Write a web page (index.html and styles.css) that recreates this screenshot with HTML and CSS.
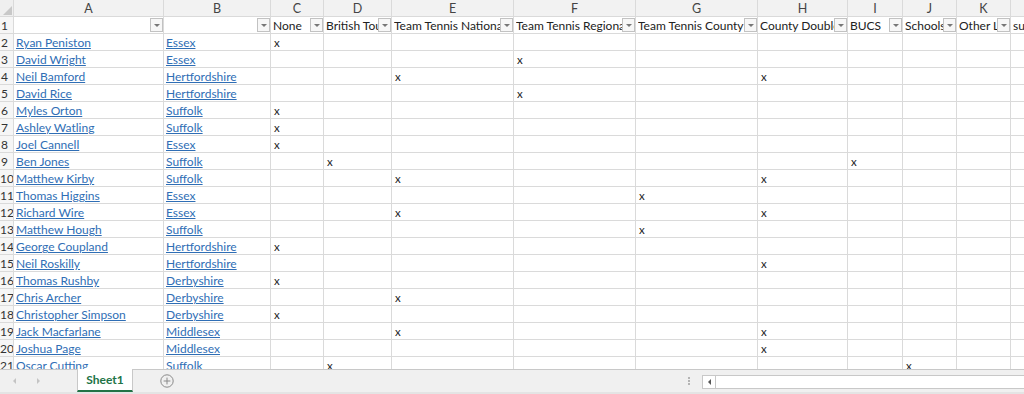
FILE: index.html
```html
<!DOCTYPE html>
<html lang="en">

<head>
    <meta charset="UTF-8">
    <meta name="viewport" content="width=device-width, initial-scale=1.0">
    <title>Sheet1</title>
    <link rel="stylesheet" href="styles.css">
</head>

<body>
<div class="book">
    <div class="sheet" id="sheet"></div>
    <div class="tabs">
        <div class="nav">
            <span class="tri left"></span>
            <span class="tri right"></span>
        </div>
        <div class="tab">Sheet1</div>
        <div class="add">
            <svg width="14" height="14" viewBox="0 0 14 14">
                <circle cx="7" cy="7" r="6.2" fill="none" stroke="#8a8a8a" stroke-width="1"/>
                <path d="M7 3.6v6.8M3.6 7h6.8" stroke="#8a8a8a" stroke-width="1"/>
            </svg>
        </div>
        <div class="spacer"></div>
        <div class="grip"><i></i><i></i><i></i></div>
        <div class="hscroll">
            <div class="hbtn"><span class="tri dark"></span></div>
        </div>
    </div>
</div>
<script type="text/javascript">
    (function (d) {
        var letters = ['', 'A', 'B', 'C', 'D', 'E', 'F', 'G', 'H', 'I', 'J', 'K', ''],
            heads = ['', '', 'None', 'British Tour', 'Team Tennis National', 'Team Tennis Regional',
                'Team Tennis County', 'County Doubles', 'BUCS', 'Schools', 'Other League', 'sum'],
            rows = [
                ['Ryan Peniston', 'Essex', 'C'],
                ['David Wright', 'Essex', 'F'],
                ['Neil Bamford', 'Hertfordshire', 'EH'],
                ['David Rice', 'Hertfordshire', 'F'],
                ['Myles Orton', 'Suffolk', 'C'],
                ['Ashley Watling', 'Suffolk', 'C'],
                ['Joel Cannell', 'Essex', 'C'],
                ['Ben Jones', 'Suffolk', 'DI'],
                ['Matthew Kirby', 'Suffolk', 'EH'],
                ['Thomas Higgins', 'Essex', 'G'],
                ['Richard Wire', 'Essex', 'EH'],
                ['Matthew Hough', 'Suffolk', 'G'],
                ['George Coupland', 'Hertfordshire', 'C'],
                ['Neil Roskilly', 'Hertfordshire', 'H'],
                ['Thomas Rushby', 'Derbyshire', 'C'],
                ['Chris Archer', 'Derbyshire', 'E'],
                ['Christopher Simpson', 'Derbyshire', 'C'],
                ['Jack Macfarlane', 'Middlesex', 'EH'],
                ['Joshua Page', 'Middlesex', 'H'],
                ['Oscar Cutting', 'Suffolk', 'DJ']
            ],
            s = d.getElementById('sheet'),
            html = '';

        // column letters
        letters.forEach(function (l, i) {
            html += '<div class="' + (i === 0 ? 'corner' : 'colhead') + '">' + l + '</div>';
        });

        // row 1 with filters
        html += '<div class="rowhead"><span>1</span></div>';
        heads.forEach(function (h, i) {
            var btn = i < 11 ? '<span class="filter"></span>' : '';
            html += '<div class="cell head"><span class="txt">' + h + '</span>' + btn + '</div>';
        });

        rows.forEach(function (r, n) {
            html += '<div class="rowhead"><span>' + (n + 2) + '</span></div>';
            html += '<div class="cell"><a href="#">' + r[0] + '</a></div>';
            html += '<div class="cell"><a href="#">' + r[1] + '</a></div>';
            for (var c = 3; c < 13; c++) {
                html += '<div class="cell mark">' + (r[2].indexOf(letters[c]) > -1 && letters[c] ? 'x' : '') + '</div>';
            }
        });

        s.innerHTML = html;
    })(document);
</script>
</body>

</html>
```

FILE: styles.css
```css
body {
    margin: 0;
    padding: 0;
    background: #fff;
    font-family: Lato, "Open Sans", sans-serif;
}

.book {
    width: 1024px;
    height: 394px;
    overflow: hidden;
    display: flex;
    flex-direction: column;
}

.sheet {
    height: 369px;
    overflow: hidden;
    display: grid;
    grid-template-columns: 13px 149px 106px 52px 67px 121px 121px 121px 89px 54px 53px 53px 60px;
    grid-auto-rows: 16px;
    gap: 1px;
    background: #dadada;
    align-content: start;
}

.sheet > div {
    background: #fff;
    overflow: hidden;
    white-space: nowrap;
    line-height: 17px;
}

.corner {
    position: relative;
    background: #efefef !important;
}

.corner::after {
    content: "";
    position: absolute;
    right: 1px;
    bottom: 1px;
    border-left: 9px solid transparent;
    border-bottom: 9px solid #c8c8c8;
}

.colhead {
    background: #f2f2f2 !important;
    color: #444;
    font-size: 12.5px;
    text-align: center;
}

.rowhead {
    background: #f6f6f6 !important;
    color: #333;
    font-size: 12px;
}

.rowhead span {
    display: block;
    width: 9px;
    text-align: center;
}

.cell {
    font-size: 12px;
    color: #222;
    padding-left: 2px;
}

.cell a {
    color: #2f6eb5;
    text-decoration: underline;
    text-underline-offset: 1px;
}

.cell.head {
    display: flex;
    align-items: center;
    padding-left: 2px;
    color: #222;
}

.cell.head .txt {
    flex: 1;
    overflow: hidden;
    white-space: nowrap;
}

.filter {
    flex: none;
    box-sizing: border-box;
    width: 13px;
    height: 14px;
    border: 1px solid #c2c2c2;
    background: #f7f7f7;
    position: relative;
}

.filter::after {
    content: "";
    position: absolute;
    left: 3px;
    top: 5px;
    border-left: 3px solid transparent;
    border-right: 3px solid transparent;
    border-top: 3px solid #777;
}

.mark {
    padding-left: 3px !important;
    font-size: 11.5px !important;
}

.tabs {
    flex: none;
    height: 25px;
    box-sizing: border-box;
    border-top: 1px solid #c8c8c8;
    border-bottom: 2px solid #e4e4e4;
    background: #f0f0f0;
    display: flex;
    align-items: stretch;
}

.nav {
    width: 77px;
    display: flex;
    align-items: center;
    gap: 21px;
    padding-left: 13px;
    box-sizing: border-box;
}

.tri {
    display: block;
    width: 0;
    height: 0;
    border-top: 3px solid transparent;
    border-bottom: 3px solid transparent;
}

.tri.left {
    border-right: 3px solid #c4c4c4;
}

.tri.right {
    border-left: 3px solid #c4c4c4;
}

.tri.dark {
    border-right: 3px solid #555;
}

.tab {
    width: 56px;
    margin-top: -1px;
    box-sizing: border-box;
    background: #fff;
    border-left: 1px solid #c8c8c8;
    border-right: 1px solid #c8c8c8;
    border-bottom: 2px solid #217346;
    color: #217346;
    font-weight: 700;
    font-size: 12px;
    text-align: center;
    line-height: 22px;
}

.add {
    margin-left: 27px;
    display: flex;
    align-items: center;
}

.spacer {
    flex: 1;
}

.grip {
    display: flex;
    flex-direction: column;
    justify-content: center;
    gap: 1px;
    margin-right: 12px;
}

.grip i {
    display: block;
    width: 2px;
    height: 2px;
    background: #b4b4b4;
}

.hscroll {
    width: 321px;
    margin: 5px 0 3px 0;
    background: #fff;
    border: 1px solid #c8c8c8;
    border-right: none;
    display: flex;
}

.hbtn {
    width: 12px;
    border-right: 1px solid #c8c8c8;
    display: flex;
    align-items: center;
    justify-content: center;
}
```
